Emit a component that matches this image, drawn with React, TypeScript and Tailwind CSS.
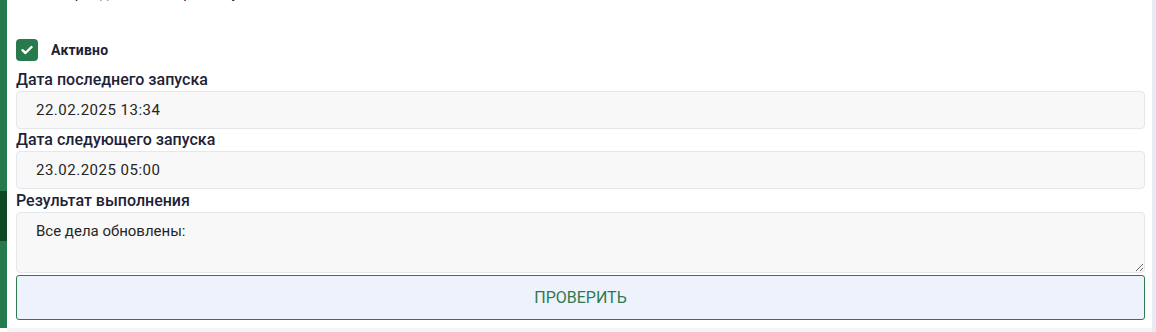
import React from "react";

export default function App() {
  const font = { fontFamily: "Roboto, 'Noto Sans', sans-serif" };
  return (
    <div className="w-[1156px] h-[332px] overflow-hidden bg-white flex" style={font}>
      <div className="w-[7px] flex flex-col">
        <div className="h-[191px] bg-[#277a4c]" />
        <div className="h-[50px] bg-[#0c4a24]" />
        <div className="h-[87px] bg-[#277a4c]" />
        <div className="flex-1 bg-white" />
      </div>
      <div className="flex-1 flex flex-col">
        <div className="flex-1 pl-[9px] pr-[7px] overflow-hidden">
          <div className="h-[39px] overflow-hidden relative">
            <div className="absolute left-[40px] top-[-18px] text-[15px] text-[#1e2235] whitespace-nowrap">Периодичность – раз в сутки</div>
          </div>
          <label className="flex items-center gap-[13px] h-[22px]">
            <span className="w-[22px] h-[22px] rounded-[4px] bg-[#277a4c] flex items-center justify-center">
              <svg width="12" height="10" viewBox="0 0 12 10" fill="none">
                <path d="M1.5 5.2 L4.5 8 L10.5 2" stroke="white" strokeWidth="2.4" strokeLinecap="round" strokeLinejoin="round" />
              </svg>
            </span>
            <span className="text-[14px] font-bold tracking-[0.2px] text-[#1e2235]">Активно</span>
          </label>
          <div className="mt-[8px] text-[16px] font-medium text-[#1e2235] leading-[22px] whitespace-nowrap">Дата последнего запуска</div>
          <div className="h-[38px] rounded-[4px] border border-[#e4e7ec] bg-[#f8f8f8] flex items-center pl-[19px] text-[15px] tracking-[0.5px] text-[#262626]">22.02.2025 13:34</div>
          <div className="text-[16px] font-medium text-[#1e2235] leading-[22px] whitespace-nowrap">Дата следующего запуска</div>
          <div className="h-[38px] rounded-[4px] border border-[#e4e7ec] bg-[#f8f8f8] flex items-center pl-[19px] text-[15px] tracking-[0.5px] text-[#262626]">23.02.2025 05:00</div>
          <div className="text-[16px] font-medium text-[#1e2235] leading-[23px] whitespace-nowrap">Результат выполнения</div>
          <textarea
            readOnly
            defaultValue="Все дела обновлены:"
            className="block w-full h-[61px] rounded-[4px] border border-[#e4e7ec] bg-[#f8f8f8] pl-[19px] pt-[7px] text-[15px] text-[#262626] outline-none resize-y"
            style={font}
          />
          <button className="mt-[2px] w-full h-[45px] rounded-[3px] border border-[#2e7a4f] bg-[#eef2fc] text-[16px] text-[#2e7a4f] uppercase">
            Проверить
          </button>
        </div>
        <div className="h-[4px] bg-[#f4f5f7]" />
      </div>
      <div className="w-[4px] bg-[#e8ebf3]" />
    </div>
  );
}
